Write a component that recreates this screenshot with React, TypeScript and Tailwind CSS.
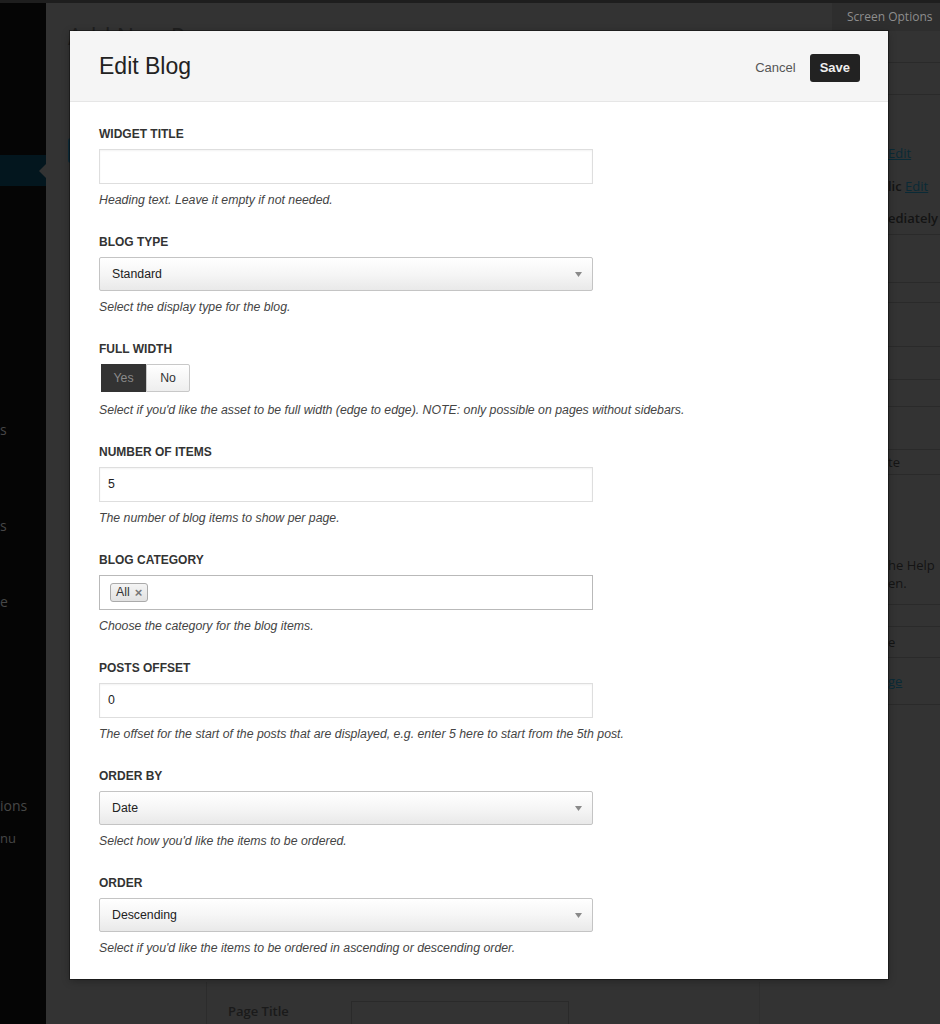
import type { ReactNode } from "react";

function Field({
  label,
  help,
  helpGap = "mt-2",
  children,
}: {
  label: string;
  help: string;
  helpGap?: string;
  children: ReactNode;
}) {
  return (
    <div className="mb-[26px]">
      <div className="mb-[7px] h-4 text-[12px] font-bold uppercase leading-4 text-[#333]">{label}</div>
      {children}
      <p className={`${helpGap} h-4 text-[12.3px] italic leading-4 text-[#444]`}>{help}</p>
    </div>
  );
}

function TextInput({ value = "" }: { value?: string }) {
  return (
    <div className="flex h-[35px] w-[494px] items-center border border-[#dedede] bg-white pl-2 text-[12.3px] text-[#222] shadow-[inset_0_1px_2px_rgba(0,0,0,0.05)]">
      {value}
    </div>
  );
}

function Select({ value }: { value: string }) {
  return (
    <div className="flex h-[34px] w-[494px] items-center justify-between rounded-[2px] border border-[#c4c4c4] bg-gradient-to-b from-white via-[#f6f6f6] to-[#e9e9e9] pr-[10px] pl-3 text-[12.3px] text-[#222]">
      <span>{value}</span>
      <svg width="7" height="5" viewBox="0 0 7 5">
        <path d="M0 0h7L3.5 5z" fill="#8a8a8a" />
      </svg>
    </div>
  );
}

export default function App() {
  return (
    <div className="relative flex h-[1024px] w-[940px] flex-col overflow-hidden bg-[#333] font-['Open_Sans',sans-serif]">
      <div className="h-[3px] bg-[#1e1e1e]" />
      <div className="flex flex-1">
        {/* admin sidebar */}
        <aside className="flex w-[46px] flex-col bg-[#050505] text-[14px] leading-5 text-[#474747]">
          <div className="h-[152px]" />
          <div className="relative h-[31px] bg-[#03161e]">
            <div className="absolute top-[9px] right-0 h-0 w-0 border-y-[7px] border-r-[7px] border-y-transparent border-r-[#333]" />
          </div>
          <div className="h-[234px]" />
          <div className="h-[96px]">s</div>
          <div className="h-[76px]">s</div>
          <div className="h-[204px]">e</div>
          <div className="h-[32px]">ions</div>
          <div className="text-[13px]">nu</div>
        </aside>

        {/* page content */}
        <main className="flex flex-1">
          <div className="flex flex-1 flex-col">
            <h1 className="mt-[19px] pl-[22px] text-[23px] leading-7 text-[#1f1f1f]">Add New Page</h1>
            <div className="mt-[88px] ml-[22px] h-[25px] w-[90px] rounded-[3px] bg-[#0f2d3b]" />
            <div className="flex-1" />
            <div className="ml-[160px] flex h-[42px] border-l border-[#2c2c2c]">
              <div className="flex-1 pt-[19px] pl-[21px]">
                <div className="flex items-start gap-[62px]">
                  <span className="mt-[1px] text-[13px] font-semibold text-[#1a1a1a]">Page Title</span>
                  <div className="h-[30px] w-[218px] border border-[#2a2a2a]" />
                </div>
              </div>
              <div className="w-[73px] border-l border-[#2f2f2f]" />
            </div>
          </div>

          {/* right meta boxes */}
          <div className="flex w-[108px] flex-col overflow-hidden text-[13px] leading-4 text-[#141414]">
            <div className="flex h-[28px] items-center bg-[#2e2e2e] pl-[15px] text-[12px] whitespace-nowrap text-[#8d8d8d]">
              Screen Options
            </div>
            <div className="h-[32px] border-b border-[#2a2a2a]" />
            <div className="h-[32px] border-b border-[#2a2a2a]" />
            <div className="h-[140px] border-b border-[#2a2a2a] pl-[56px] whitespace-nowrap">
              <div className="mt-[50px] text-[#0a2a36] underline">Edit</div>
              <div className="mt-[17px]">
                <span className="font-semibold">lic</span> <span className="text-[#0a2a36] underline">Edit</span>
              </div>
              <div className="mt-[16px]">
                <span className="font-semibold">ediately</span>
              </div>
            </div>
            <div className="h-[48px] border-b border-[#2a2a2a]" />
            <div className="h-[20px] border-b border-[#2a2a2a]" />
            <div className="h-[44px] border-b border-[#2a2a2a]" />
            <div className="h-[33px] border-b border-[#2a2a2a]" />
            <div className="h-[27px] border-b border-[#2a2a2a]" />
            <div className="h-[43px] border-b border-[#2a2a2a]" />
            <div className="flex h-[25px] items-center border-b border-[#2a2a2a] pl-[56px]">te</div>
            <div className="h-[130px] border-b border-[#2a2a2a] pl-[56px] leading-[18px] whitespace-nowrap">
              <div className="mt-[81px]">he Help</div>
              <div>en.</div>
            </div>
            <div className="h-[22px] border-b border-[#2a2a2a]" />
            <div className="flex h-[31px] items-center border-b border-[#2a2a2a] pl-[56px]">e</div>
            <div className="flex h-[47px] items-center border-b border-[#2a2a2a] pl-[56px] text-[#0a2a36] underline">ge</div>
          </div>
        </main>
      </div>

      {/* modal */}
      <div className="absolute top-[31px] left-[70px] flex h-[948px] w-[818px] flex-col overflow-hidden bg-white font-['Liberation_Sans',Arial,sans-serif] shadow-[0_0_0_1px_rgba(0,0,0,0.35),0_2px_8px_rgba(0,0,0,0.3)]">
        <div className="flex h-[71px] shrink-0 items-center justify-between border-b border-[#e6e6e6] bg-[#f5f5f5] pr-[28px] pl-[29px]">
          <h2 className="text-[23px] leading-7 text-[#222]">Edit Blog</h2>
          <div className="mt-[3px] flex items-center gap-[14px]">
            <span className="text-[13px] text-[#555]">Cancel</span>
            <button className="h-[28px] rounded-[3px] bg-[#222] px-[10px] text-[13px] font-bold text-[#eee]">Save</button>
          </div>
        </div>

        <div className="shrink-0 pt-[24px] pl-[29px]">
          <Field label="Widget Title" help="Heading text. Leave it empty if not needed.">
            <TextInput />
          </Field>
          <Field label="Blog Type" help="Select the display type for the blog.">
            <Select value="Standard" />
          </Field>
          <Field
            label="Full Width"
            helpGap="mt-[10px]"
            help="Select if you'd like the asset to be full width (edge to edge). NOTE: only possible on pages without sidebars."
          >
            <div className="ml-[2px] flex h-[28px] text-[12.3px]">
              <div className="flex w-[45px] items-center justify-center bg-[#333] text-[#8a8a8a]">Yes</div>
              <div className="flex w-[44px] items-center justify-center rounded-r-[2px] border border-[#c8c8c8] bg-gradient-to-b from-white to-[#eee] text-[#333]">
                No
              </div>
            </div>
          </Field>
          <Field label="Number of Items" help="The number of blog items to show per page.">
            <TextInput value="5" />
          </Field>
          <Field label="Blog Category" help="Choose the category for the blog items.">
            <div className="flex h-[35px] w-[494px] items-center border border-[#b9b9b9] bg-white pl-[10px]">
              <div className="flex h-[19px] items-center gap-[5px] rounded-[3px] border border-[#aaa] bg-gradient-to-b from-[#f4f4f4] to-[#e2e2e2] px-[5px] text-[12.3px] text-[#333]">
                <span>All</span>
                <span className="text-[13px] leading-none font-bold text-[#777]">×</span>
              </div>
            </div>
          </Field>
          <Field
            label="Posts Offset"
            help="The offset for the start of the posts that are displayed, e.g. enter 5 here to start from the 5th post."
          >
            <TextInput value="0" />
          </Field>
          <Field label="Order By" help="Select how you'd like the items to be ordered.">
            <Select value="Date" />
          </Field>
          <Field label="Order" help="Select if you'd like the items to be ordered in ascending or descending order.">
            <Select value="Descending" />
          </Field>
        </div>
      </div>
    </div>
  );
}
